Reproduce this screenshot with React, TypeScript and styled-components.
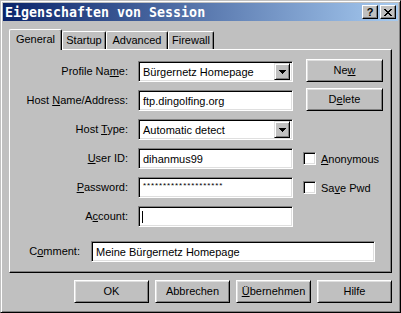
import React from 'react';
import styled, { createGlobalStyle } from 'styled-components';

const Global = createGlobalStyle`
  html, body { margin: 0; padding: 0; background: #c0c0c0; }
  body {
    font-family: "Liberation Sans", Arial, sans-serif;
    font-size: 11px;
    color: #000;
  }
  u { text-decoration: underline; text-underline-offset: 1px; }
`;

const Window = styled.div`
  width: 401px;
  height: 313px;
  box-sizing: border-box;
  background: #c0c0c0;
  border: 1px solid;
  border-color: #c0c0c0 #000 #000 #c0c0c0;
  box-shadow: inset 1px 1px #fff, inset -1px -1px #808080;
  padding: 2px;
  display: flex;
  flex-direction: column;
`;

const TitleBar = styled.div`
  height: 18px;
  display: flex;
  align-items: center;
  padding-left: 2px;
  background: linear-gradient(to right, #0a246a 0%, #a6caf0 100%);
`;

const TitleText = styled.span`
  font-family: "DejaVu Sans Mono", "Liberation Mono", monospace;
  font-weight: bold;
  font-size: 13.3px;
  color: #fff;
  white-space: pre;
`;

const TitleButtons = styled.div`
  margin-left: auto;
  margin-right: 2px;
  display: flex;
  gap: 2px;
`;

const CaptionButton = styled.div`
  width: 16px;
  height: 14px;
  box-sizing: border-box;
  background: #c0c0c0;
  border: 1px solid;
  border-color: #fff #000 #000 #fff;
  box-shadow: inset -1px -1px #808080;
  display: flex;
  align-items: center;
  justify-content: center;
  font-weight: bold;
  font-size: 11px;
  line-height: 1;
`;

const Body = styled.div`
  padding: 8px 6px 0;
  display: flex;
  flex-direction: column;
`;

const TabRow = styled.div`
  display: flex;
  align-items: flex-end;
  height: 20px;
  position: relative;
  z-index: 1;
`;

const Tab = styled.div<{ $active?: boolean; $w: number }>`
  width: ${p => p.$w}px;
  height: ${p => (p.$active ? 21 : 18)}px;
  margin-bottom: ${p => (p.$active ? -1 : 0)}px;
  box-sizing: border-box;
  background: #c0c0c0;
  border-left: 1px solid #fff;
  border-top: 1px solid #fff;
  border-right: 1px solid #000;
  border-radius: 2px 2px 0 0;
  box-shadow: inset -1px 0 #808080;
  text-align: center;
  padding-top: ${p => (p.$active ? 3 : 2)}px;
`;

const Panel = styled.div`
  height: 224px;
  box-sizing: border-box;
  border: 1px solid;
  border-color: #fff #000 #000 #fff;
  box-shadow: inset -1px -1px #808080;
  padding: 11px 0 0 0;
`;

const FormGrid = styled.div`
  display: grid;
  grid-template-columns: 118px 155px auto;
  grid-auto-rows: 21px;
  column-gap: 10px;
  row-gap: 8px;
`;

const Label = styled.div`
  line-height: 21px;
  text-align: right;
  white-space: nowrap;
`;

const Field = styled.div<{ $w?: number }>`
  width: ${p => (p.$w ? `${p.$w}px` : 'auto')};
  height: 21px;
  box-sizing: border-box;
  background: #fff;
  border: 1px solid;
  border-color: #808080 #fff #fff #808080;
  box-shadow: inset 1px 1px #000, inset -1px -1px #dfdfdf;
  padding: 1px 1px 1px 4px;
  display: flex;
  align-items: center;
  white-space: nowrap;
  overflow: hidden;
`;

const Combo = styled(Field)`
  padding: 2px 2px 2px 4px;
`;

const ComboText = styled.span`
  flex: 1;
`;

const ArrowButton = styled.div`
  width: 16px;
  height: 17px;
  box-sizing: border-box;
  background: #c0c0c0;
  border: 1px solid;
  border-color: #dfdfdf #000 #000 #dfdfdf;
  box-shadow: inset 1px 1px #fff, inset -1px -1px #808080;
  display: flex;
  align-items: center;
  justify-content: center;
`;

const Stars = styled.span`
  font-size: 8px;
  letter-spacing: 0.9px;
  align-self: flex-start;
  margin-top: 2px;
`;

const Caret = styled.span`
  width: 1px;
  height: 12px;
  background: #000;
  margin-left: -1px;
`;

const SideButtonCell = styled.div`
  padding-left: 3px;
  margin-top: -2px;
`;

const Button = styled.div<{ $w: number }>`
  width: ${p => p.$w}px;
  height: 23px;
  box-sizing: border-box;
  background: #c0c0c0;
  border: 1px solid;
  border-color: #fff #000 #000 #fff;
  box-shadow: inset 1px 1px #dfdfdf, inset -1px -1px #808080;
  line-height: 21px;
  text-align: center;
  white-space: nowrap;
`;

const CheckCell = styled.div`
  display: flex;
  align-items: center;
  gap: 5px;
`;

const CheckBox = styled.span`
  width: 13px;
  height: 13px;
  box-sizing: border-box;
  background: #fff;
  border: 1px solid;
  border-color: #808080 #fff #fff #808080;
  box-shadow: inset 1px 1px #000, inset -1px -1px #dfdfdf;
`;

const CommentRow = styled.div`
  display: flex;
  align-items: center;
  gap: 11px;
  margin-top: 14px;
`;

const CommentLabel = styled(Label)`
  width: 70px;
`;

const ButtonBar = styled.div`
  display: flex;
  justify-content: flex-end;
  gap: 6px;
  margin-top: 7px;
`;

const DownArrow = () => (
  <svg width="7" height="4" viewBox="0 0 7 4" shapeRendering="crispEdges">
    <rect x="0" y="0" width="7" height="1" fill="#000" />
    <rect x="1" y="1" width="5" height="1" fill="#000" />
    <rect x="2" y="2" width="3" height="1" fill="#000" />
    <rect x="3" y="3" width="1" height="1" fill="#000" />
  </svg>
);

const CloseGlyph = () => (
  <svg width="8" height="7" viewBox="0 0 8 7" shapeRendering="crispEdges">
    {[0, 1, 2, 3, 4, 5, 6].map(i => (
      <React.Fragment key={i}>
        <rect x={i} y={i} width="2" height="1" fill="#000" />
        <rect x={6 - i} y={i} width="2" height="1" fill="#000" />
      </React.Fragment>
    ))}
  </svg>
);

export default function App() {
  return (
    <>
      <Global />
      <Window>
        <TitleBar>
          <TitleText>Eigenschaften von Session</TitleText>
          <TitleButtons>
            <CaptionButton>?</CaptionButton>
            <CaptionButton>
              <CloseGlyph />
            </CaptionButton>
          </TitleButtons>
        </TitleBar>
        <Body>
          <TabRow>
            <Tab $active $w={53}>General</Tab>
            <Tab $w={44}>Startup</Tab>
            <Tab $w={62}>Advanced</Tab>
            <Tab $w={46}>Firewall</Tab>
          </TabRow>
          <Panel>
            <FormGrid>
              <Label>Profile Na<u>m</u>e:</Label>
              <Combo>
                <ComboText>Bürgernetz Homepage</ComboText>
                <ArrowButton>
                  <DownArrow />
                </ArrowButton>
              </Combo>
              <SideButtonCell>
                <Button $w={77}>Ne<u>w</u></Button>
              </SideButtonCell>

              <Label>Host <u>N</u>ame/Address:</Label>
              <Field>ftp.dingolfing.org</Field>
              <SideButtonCell>
                <Button $w={77}>D<u>e</u>lete</Button>
              </SideButtonCell>

              <Label>Host <u>T</u>ype:</Label>
              <Combo>
                <ComboText>Automatic detect</ComboText>
                <ArrowButton>
                  <DownArrow />
                </ArrowButton>
              </Combo>
              <div />

              <Label><u>U</u>ser ID:</Label>
              <Field>dihanmus99</Field>
              <CheckCell>
                <CheckBox />
                <span><u>A</u>nonymous</span>
              </CheckCell>

              <Label><u>P</u>assword:</Label>
              <Field>
                <Stars>********************</Stars>
              </Field>
              <CheckCell>
                <CheckBox />
                <span>Sa<u>v</u>e Pwd</span>
              </CheckCell>

              <Label>A<u>c</u>count:</Label>
              <Field>
                <Caret />
              </Field>
              <div />
            </FormGrid>
            <CommentRow>
              <CommentLabel>C<u>o</u>mment:</CommentLabel>
              <Field $w={284}>Meine Bürgernetz Homepage</Field>
            </CommentRow>
          </Panel>
          <ButtonBar>
            <Button $w={75}>OK</Button>
            <Button $w={75}>Abbrechen</Button>
            <Button $w={75}><u>Ü</u>bernehmen</Button>
            <Button $w={75}>Hilfe</Button>
          </ButtonBar>
        </Body>
      </Window>
    </>
  );
}
